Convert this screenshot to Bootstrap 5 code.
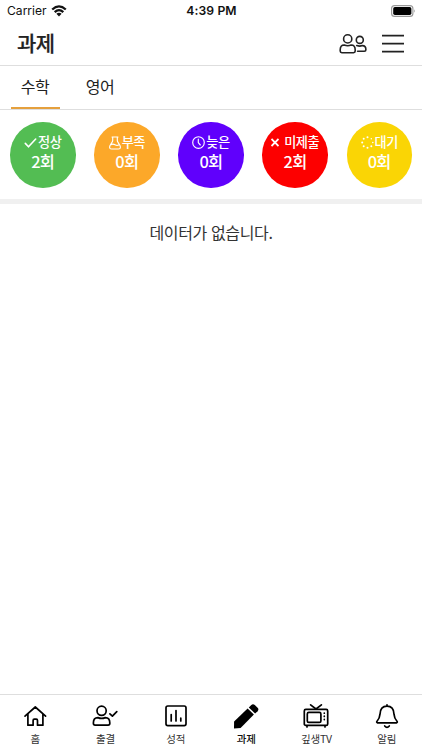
<!DOCTYPE html>
<html lang="ko">
<head>
<meta charset="utf-8">
<meta name="viewport" content="width=device-width, initial-scale=1">
<title>과제</title>
<link href="https://cdn.jsdelivr.net/npm/bootstrap@5.3.0/dist/css/bootstrap.min.css" rel="stylesheet">
<style>
body{font-family:"Noto Sans CJK KR",sans-serif;color:#222;height:750px;overflow:hidden;line-height:1}
svg{display:block;fill:none;stroke:currentColor;stroke-width:1.7;stroke-linecap:round;stroke-linejoin:round;flex:none}
.status{height:22px;font:12.1px/22px Inter,sans-serif;color:#111;padding:0 6px 0 7px}
.status>*{flex:1 1 0}
.status .time{font-weight:600;font-size:12.2px;letter-spacing:.1px}
.wifi{stroke-width:2.3;stroke-linecap:butt}
.people{stroke-width:1.6;margin-right:15px}
.burger{stroke-width:1.8;stroke-linecap:butt}
.topbar{height:44px;border-bottom:1px solid #dedede;padding:0 18px 0 17px}
.topbar h1{font-size:21px;font-weight:500;line-height:30px;letter-spacing:-.5px;margin:0 0 4px;-webkit-text-stroke:.2px #222}
.subjects{height:44px;border-bottom:1px solid #dedede;padding-left:11px;gap:16px}
.subjects .nav-link{width:49px;height:43px;padding:0 1px 0 0;color:#222;font-size:16px;line-height:40px;text-align:center;letter-spacing:-.5px;border-bottom:2px solid transparent;white-space:nowrap}
.subjects .nav-link.active{border-color:#e5a03d}
.summary{height:94px;border-bottom:5px solid #f0f0f0;padding:12px 10px 0 10px;box-sizing:border-box}
.bubble{width:65.5px;height:65.5px;color:#fff;padding-bottom:4px}
.bubble .kind{font-size:13.2px;font-weight:500;line-height:18px;height:18px;letter-spacing:-.5px;white-space:nowrap;gap:1px}
.bubble .kind svg{margin-top:1px}
.bubble .count{font-size:16.4px;font-weight:500;line-height:21px;letter-spacing:-.6px}
.tick{stroke-width:1.6}.thin{stroke-width:1.15}.cross{stroke-width:1.8;stroke-linecap:butt}
.solid{fill:currentColor;stroke:none}
.bg-ok{background:#53bd53}.bg-low{background:#fca829}.bg-late{background:#6000fc}.bg-miss{background:#fd0000}.bg-wait{background:#fad505}
.message{font-size:16px;line-height:24px;padding-top:16px;letter-spacing:-.35px;color:#333}
.tabbar{height:56px;border-top:1px solid #dedede}
.tabbar a{flex:1 1 0;color:#000;padding-top:7px}
.tabbar span{font-size:10.5px;line-height:15px;margin-top:1px;letter-spacing:-.2px;color:#333}
.tabbar .current span{font-weight:500;color:#111}
</style>
<script src="https://cdn.jsdelivr.net/npm/bootstrap@5.3.0/dist/js/bootstrap.bundle.min.js"></script>
</head>
<body class="bg-white d-flex flex-column">
<div class="status d-flex align-items-center">
  <div class="d-flex align-items-center"><span>Carrier</span>
    <svg class="wifi ms-1" width="16" height="12" viewBox="0 0 16 12"><path d="M1.2 4.5Q8-1.7 14.8 4.5M3.7 7.1Q8 3.2 12.3 7.1"/><path class="solid" d="M5.4 8.8Q8 6.8 10.6 8.8L8 11.6z"/></svg>
  </div>
  <div class="time text-center">4:39 PM</div>
  <div class="d-flex justify-content-end"><svg width="25" height="12" viewBox="0 0 25 12"><rect x=".6" y=".6" width="21.3" height="10.8" rx="3" stroke="#999" class="thin"/><rect x="2.2" y="2.1" width="18.2" height="7.8" rx="1.7" fill="#000" stroke="none"/><path d="M23.2 4.2q1.6 1.8 0 3.6z" fill="#999" stroke="none"/></svg></div>
</div>
<header class="topbar d-flex align-items-center justify-content-between">
  <h1>과제</h1>
  <div class="d-flex align-items-center">
    <svg class="people" width="28" height="20" viewBox="0 0 28 20"><circle cx="8.7" cy="4.9" r="4.1"/><path d="M5.2 11Q8.7 12.5 12.2 11C15 11 16.2 13.4 16.2 15.9V17.1Q16.2 18.7 14.6 18.7H2.8Q1.2 18.7 1.2 17.1V15.9C1.2 13.4 2.4 11 5.2 11z"/><circle cx="20.8" cy="5.9" r="3.5"/><path d="M17.7 11.6Q20.8 12.6 23.4 11.6C26 11.6 26.9 13.7 26.9 15.7Q26.9 17.3 25.3 17.3H18.6"/></svg>
    <svg class="burger" width="22" height="20" viewBox="0 0 22 20"><path d="M0 1.6H22M0 9.6H22M0 17.6H22"/></svg>
  </div>
</header>
<nav class="subjects nav flex-nowrap">
  <a class="nav-link active" href="#">수학</a><a class="nav-link" href="#">영어</a>
</nav>
<section class="summary d-flex justify-content-between">
  <div class="bubble bg-ok rounded-circle d-flex flex-column align-items-center justify-content-center"><div class="kind d-flex align-items-center"><svg class="tick" width="13" height="12" viewBox="0 0 13 12"><path d="M1.3 6.4L4.5 9.8L11.7 2"/></svg>정상</div><div class="count">2회</div></div>
  <div class="bubble bg-low rounded-circle d-flex flex-column align-items-center justify-content-center"><div class="kind d-flex align-items-center"><svg class="thin" width="12" height="14" viewBox="0 0 12 14"><path d="M3 1H9M3.7 1.2V4.5Q3.7 5.5 2.8 6.6L.9 9.8Q-.1 13 2.8 13H9.2Q12.1 13 11.1 9.8L9.2 6.6Q8.3 5.5 8.3 4.5V1.2M1.8 8.7Q4 7.5 6 8.7T10.2 8.7"/></svg>부족</div><div class="count">0회</div></div>
  <div class="bubble bg-late rounded-circle d-flex flex-column align-items-center justify-content-center"><div class="kind d-flex align-items-center"><svg class="thin" width="13" height="13" viewBox="0 0 13 13"><circle cx="6.5" cy="6.5" r="5.8"/><path d="M6.3 3V6.7L8.3 9"/></svg>늦은</div><div class="count">0회</div></div>
  <div class="bubble bg-miss rounded-circle d-flex flex-column align-items-center justify-content-center"><div class="kind d-flex align-items-center"><svg class="cross me-1" width="8" height="9" viewBox="0 0 8 9"><path d="M.5 1L7.5 8M7.5 1L.5 8"/></svg>미제출</div><div class="count">2회</div></div>
  <div class="bubble bg-wait rounded-circle d-flex flex-column align-items-center justify-content-center"><div class="kind d-flex align-items-center"><svg class="solid" width="13" height="13" viewBox="0 0 13 13"><circle cx="6.5" cy="1.2" r="1"/><circle cx="2.7" cy="2.7" r="1"/><circle cx="1.2" cy="6.5" r="1"/><circle cx="2.7" cy="10.3" r="1"/><circle cx="6.5" cy="11.8" r="1"/><circle cx="10.3" cy="10.3" r="1"/><circle cx="11.8" cy="6.5" r=".8"/><circle cx="10.3" cy="2.7" r=".7"/></svg>대기</div><div class="count">0회</div></div>
</section>
<main class="flex-grow-1 text-center"><p class="message m-0">데이터가 없습니다.</p></main>
<footer class="tabbar d-flex">
  <a href="#" class="d-flex flex-column align-items-center text-decoration-none"><svg width="28" height="28" viewBox="0 0 28 28"><path d="M4 14.2L14.3 5L24.6 14.2M6.9 12V23.2H12.1V18.5Q12.1 17.2 13.3 17.2H15.3Q16.5 17.2 16.5 18.5V23.2H21.9V12"/></svg><span>홈</span></a>
  <a href="#" class="d-flex flex-column align-items-center text-decoration-none"><svg width="28" height="28" viewBox="0 0 28 28"><circle cx="10.6" cy="8.8" r="4.6"/><path d="M6.9 15.6Q10.6 17.2 14.3 15.6C17.4 15.6 18.8 18 18.8 20.8V21.6Q18.8 23.2 17.1 23.2H4.1Q2.4 23.2 2.4 21.6V20.8C2.4 18 3.8 15.6 6.9 15.6zM18.9 11.8L21.4 14.2L25.8 9.6"/></svg><span>출결</span></a>
  <a href="#" class="d-flex flex-column align-items-center text-decoration-none"><svg width="28" height="28" viewBox="0 0 28 28"><rect x="4" y="4" width="20" height="19.6" rx="1.8"/><path d="M9.2 12.5V19M14 8.5V19M18.8 16.2V19"/></svg><span>성적</span></a>
  <a href="#" class="current d-flex flex-column align-items-center text-decoration-none"><svg class="solid" width="28" height="28" viewBox="0 0 28 28"><path d="M2 26.4L2.1 19.6L15.6 6.5L21.9 12.6L8.6 25.9z"/><path d="M16.8 5.4L19.3 3Q21 1.4 22.8 3L25.6 5.8Q27.2 7.5 25.6 9.2L23.1 11.6z"/></svg><span>과제</span></a>
  <a href="#" class="d-flex flex-column align-items-center text-decoration-none"><svg width="28" height="28" viewBox="0 0 28 28"><rect x="2.3" y="7.4" width="23.4" height="16" rx="1.5"/><rect x="5.3" y="10.4" width="13.6" height="10" rx="1.5"/><path d="M8.6 2.8L14 7L19.4 2.8M5 23.8V25M23 23.8V25M22.3 11V11.2M22.3 14.2V14.4M22.3 17.4V17.6"/></svg><span>깊생TV</span></a>
  <a href="#" class="d-flex flex-column align-items-center text-decoration-none"><svg width="28" height="28" viewBox="0 0 28 28"><path d="M14 2.8V4.2M4.5 20.8Q3 20.5 4.2 19Q6.6 16.6 7 12.2C7.2 7 9.5 4.2 14 4.2S20.8 7 21 12.2Q21.4 16.6 23.8 19Q25 20.5 23.5 20.8zM11.7 24Q14 26.6 16.3 24"/></svg><span>알림</span></a>
</footer>
</body>
</html>
